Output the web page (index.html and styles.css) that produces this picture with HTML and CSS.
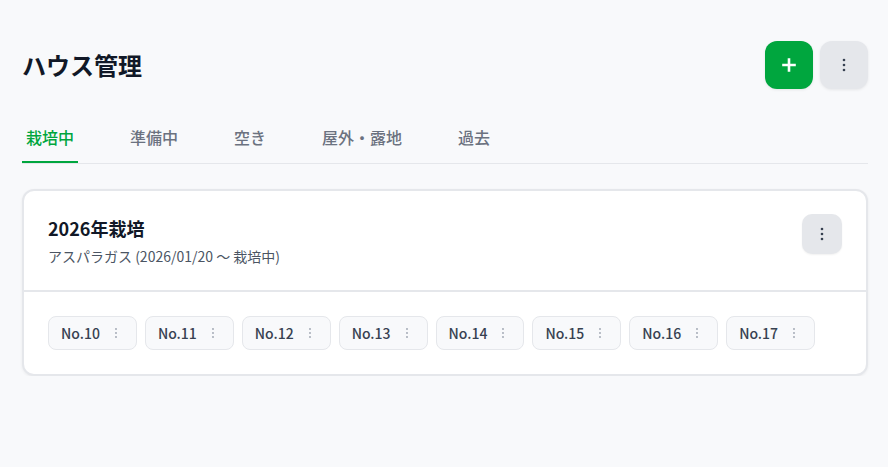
FILE: index.html
```html
<!DOCTYPE html>
<html lang="ja">
  <head>
    <meta charset="UTF-8" />
    <title>ハウス管理</title>
    <link rel="stylesheet" href="styles.css">
  </head>
  <body>
    <div class="page">
      <header class="page-header">
        <h1>ハウス管理</h1>
        <div class="header-actions">
          <button class="btn-add" title="追加">
            <svg width="14" height="14" viewBox="0 0 14 14">
              <path d="M7 1.5v11M1.5 7h11" stroke="#fff" stroke-width="2.6" stroke-linecap="square" />
            </svg>
          </button>
          <button class="btn-menu" title="メニュー">
            <svg width="4" height="16" viewBox="0 0 4 16">
              <circle cx="2" cy="3" r="1.3" fill="#374151" />
              <circle cx="2" cy="8" r="1.3" fill="#374151" />
              <circle cx="2" cy="13" r="1.3" fill="#374151" />
            </svg>
          </button>
        </div>
      </header>

      <nav class="tabs">
        <a class="tab active">栽培中</a>
        <a class="tab">準備中</a>
        <a class="tab">空き</a>
        <a class="tab">屋外・露地</a>
        <a class="tab">過去</a>
      </nav>

      <section class="card">
        <div class="card-header">
          <div>
            <h2>2026年栽培</h2>
            <p class="card-sub">アスパラガス (2026/01/20 〜 栽培中)</p>
          </div>
          <button class="btn-card-menu" title="メニュー">
            <svg width="4" height="16" viewBox="0 0 4 16">
              <circle cx="2" cy="3" r="1.3" fill="#374151" />
              <circle cx="2" cy="8" r="1.3" fill="#374151" />
              <circle cx="2" cy="13" r="1.3" fill="#374151" />
            </svg>
          </button>
        </div>
        <div class="card-body" id="houses"></div>
      </section>
    </div>

    <script>
      const houses = ["No.10", "No.11", "No.12", "No.13", "No.14", "No.15", "No.16", "No.17"];
      const list = document.getElementById("houses");
      for (let name of houses) {
        const chip = document.createElement("div");
        chip.className = "chip";
        chip.innerHTML =
          '<span class="chip-name">' + name + "</span>" +
          '<span class="chip-dots"><svg width="4" height="12" viewBox="0 0 4 12">' +
          '<circle cx="2" cy="2" r="0.9" fill="#9ca3af" />' +
          '<circle cx="2" cy="6" r="0.9" fill="#9ca3af" />' +
          '<circle cx="2" cy="10" r="0.9" fill="#9ca3af" /></svg></span>';
        list.appendChild(chip);
      }
    </script>
  </body>
</html>
```

FILE: styles.css
```css
* {
  box-sizing: border-box;
}
body {
  margin: 0;
  font-family: "Noto Sans CJK JP", "Noto Sans", sans-serif;
  background-color: #f8f9fb;
  color: #111827;
}
.page {
  padding: 41px 20px 0 22px;
}
.page-header {
  display: flex;
  align-items: center;
  justify-content: space-between;
}
h1 {
  margin: 0;
  font-size: 24px;
  font-weight: 700;
  line-height: 48px;
}
.header-actions {
  display: flex;
  gap: 7px;
}
button {
  border: none;
  padding: 0;
  cursor: pointer;
  display: flex;
  align-items: center;
  justify-content: center;
}
.btn-add,
.btn-menu {
  width: 48px;
  height: 48px;
  border-radius: 12px;
  box-shadow: 0 1px 3px rgba(0, 0, 0, 0.08);
}
.btn-add {
  background-color: #00a63e;
}
.btn-menu {
  background-color: #e5e7eb;
}
.tabs {
  display: flex;
  gap: 48px;
  margin-top: 25px;
  border-bottom: 1px solid #e5e7eb;
}
.tab {
  padding: 11px 4px 12px;
  font-size: 16px;
  line-height: 24px;
  color: #6b7280;
  font-weight: 500;
  border-bottom: 2px solid transparent;
}
.tab.active {
  color: #00a63e;
  border-bottom-color: #00a63e;
}
.card {
  margin-top: 25px;
  background-color: #fff;
  border: 2px solid #e5e7eb;
  border-radius: 12px;
  box-shadow: 0 1px 3px rgba(0, 0, 0, 0.06);
}
.card-header {
  display: flex;
  justify-content: space-between;
  align-items: flex-start;
  padding: 23px 24px 24px;
  border-bottom: 2px solid #e5e7eb;
}
h2 {
  margin: 0;
  font-size: 18px;
  font-weight: 700;
  line-height: 28px;
}
.card-sub {
  margin: 4px 0 0;
  font-size: 14px;
  line-height: 20px;
  color: #4b5563;
}
.btn-card-menu {
  width: 40px;
  height: 40px;
  border-radius: 10px;
  background-color: #e5e7eb;
  box-shadow: 0 1px 2px rgba(0, 0, 0, 0.06);
}
.card-body {
  display: flex;
  flex-wrap: wrap;
  gap: 8px;
  padding: 24px;
}
.chip {
  display: flex;
  align-items: center;
  height: 34px;
  padding: 0 10px 0 12px;
  background-color: #f8f9fb;
  border: 1px solid #e5e7eb;
  border-radius: 8px;
}
.chip-name {
  font-size: 14px;
  font-weight: 500;
  color: #374151;
}
.chip-dots {
  display: flex;
  align-items: center;
  justify-content: center;
  width: 20px;
  margin-left: 6px;
}
```
